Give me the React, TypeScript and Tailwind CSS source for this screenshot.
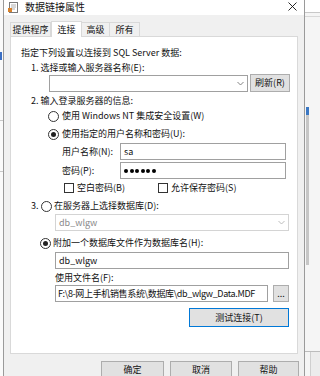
import React from "react";

const Radio = ({ checked }: { checked?: boolean }) => (
  <span className="w-[11px] h-[11px] rounded-full border border-[#333333] bg-white flex items-center justify-center shrink-0">
    {checked && <span className="w-[5px] h-[5px] rounded-full bg-[#222222]" />}
  </span>
);

const Check = () => <span className="w-[10px] h-[10px] border border-[#333333] bg-white shrink-0" />;

const Chevron = ({ color }: { color: string }) => (
  <svg width="7" height="5" viewBox="0 0 7 5" className="shrink-0">
    <path d="M0.5 1 L3.5 4 L6.5 1" fill="none" stroke={color} strokeWidth="0.9" />
  </svg>
);

export default function App() {
  return (
    <div className="w-[320px] h-[376px] overflow-hidden flex bg-[#f0f0f0] font-['Noto_Sans_CJK_SC','Noto_Sans',sans-serif] text-[9px] leading-[12px] text-[#111111]">
      {/* left strip (other window) */}
      <div className="w-[4px] h-full bg-[#fafafa] border-r border-[#9a9a9a] flex flex-col shrink-0">
        <div className="h-[52px]" />
        <div className="h-[8px] bg-[#3b6fc4] w-[2px]" />
        <div className="h-[60px]" />
        <div className="h-px bg-[#c8c8c8]" />
        <div className="h-[50px]" />
        <div className="h-px bg-[#c8c8c8]" />
      </div>

      {/* dialog */}
      <div className="w-[300px] h-full flex flex-col shrink-0 bg-[#f0f0f0]">
        {/* title bar */}
        <div className="h-[15px] bg-white flex items-center shrink-0">
          <svg width="11" height="11" viewBox="0 0 11 11" className="ml-[4px] -mt-[1px] shrink-0">
            <rect x="1.5" y="0.5" width="8" height="10" fill="#fff" stroke="#7a7a7a" />
            <path d="M3 3 H8 M3 5 H8 M3 7 H7" stroke="#9a9a9a" strokeWidth="0.8" />
            <rect x="0" y="6" width="4" height="4" fill="#d9822b" />
          </svg>
          <span className="ml-[6px] text-[10px] leading-[14px] -mt-[1px]">数据链接属性</span>
          <div className="flex-1" />
          <svg width="9" height="9" viewBox="0 0 9 9" className="mr-[7px] -mt-[3px]">
            <path d="M0.5 0.5 L8.5 8.5 M8.5 0.5 L0.5 8.5" stroke="#111" strokeWidth="0.9" />
          </svg>
        </div>

        {/* tabs */}
        <div className="ml-[6px] mt-[5px] h-[16px] flex items-end relative z-10 shrink-0">
          <div className="w-[41px] h-[14px] border border-b-0 border-[#d9d9d9] bg-[#f0f0f0] flex items-center justify-center">提供程序</div>
          <div className="w-[31px] h-[16px] -mb-px border border-b-0 border-[#d9d9d9] bg-white flex items-center justify-center">连接</div>
          <div className="w-[28px] h-[14px] border border-b-0 border-l-0 border-[#d9d9d9] bg-[#f0f0f0] flex items-center justify-center">高级</div>
          <div className="w-[30px] h-[14px] border border-b-0 border-l-0 border-[#d9d9d9] bg-[#f0f0f0] flex items-center justify-center">所有</div>
        </div>

        {/* panel */}
        <div className="ml-[6px] w-[288px] h-[318px] bg-white border border-[#d9d9d9] flex flex-col shrink-0">
          <div className="mt-[10px] ml-[10px] h-[12px]">指定下列设置以连接到 SQL Server 数据:</div>
          <div className="mt-[3px] ml-[20px] h-[12px]">1. 选择或输入服务器名称(E):</div>
          <div className="mt-0 ml-[38px] h-[18px] flex items-start">
            <div className="mt-[1px] w-[199px] h-[17px] border border-[#a0a0a0] bg-white flex items-center justify-end pr-[3px]">
              <Chevron color="#777" />
            </div>
            <div className="ml-[2px] w-[40px] h-[18px] border border-[#adadad] bg-[#e1e1e1] flex items-center justify-center">刷新(R)</div>
          </div>
          <div className="mt-[3px] ml-[20px] h-[12px]">2. 输入登录服务器的信息:</div>
          <div className="mt-[3px] ml-[37px] h-[12px] flex items-center gap-[3px]">
            <Radio />
            <span>使用 Windows NT 集成安全设置(W)</span>
          </div>
          <div className="mt-[6px] ml-[37px] h-[12px] flex items-center gap-[3px]">
            <Radio checked />
            <span>使用指定的用户名称和密码(U):</span>
          </div>
          <div className="mt-[3px] ml-[51px] h-[17px] flex items-center">
            <span className="w-[58px]">用户名称(N):</span>
            <div className="w-[166px] h-[17px] border border-[#a0a0a0] bg-white flex items-center pl-[3px]">sa</div>
          </div>
          <div className="mt-[2px] ml-[51px] h-[17px] flex items-center">
            <span className="w-[58px]">密码(P):</span>
            <div className="w-[166px] h-[17px] border border-[#a0a0a0] bg-white flex items-center pl-[3px] gap-[1.5px]">
              <span className="w-[4px] h-[4px] rounded-full bg-black" />
              <span className="w-[4px] h-[4px] rounded-full bg-black" />
              <span className="w-[4px] h-[4px] rounded-full bg-black" />
              <span className="w-[4px] h-[4px] rounded-full bg-black" />
              <span className="w-[4px] h-[4px] rounded-full bg-black" />
              <span className="w-[4px] h-[4px] rounded-full bg-black" />
            </div>
          </div>
          <div className="mt-[3px] ml-[53px] h-[12px] flex items-center">
            <div className="w-[94px] flex items-center gap-[3px]">
              <Check />
              <span>空白密码(B)</span>
            </div>
            <div className="flex items-center gap-[3px]">
              <Check />
              <span>允许保存密码(S)</span>
            </div>
          </div>
          <div className="mt-[6px] ml-[20px] h-[12px] flex items-center">
            <span className="w-[10px]">3.</span>
            <Radio />
            <span className="ml-[2px]">在服务器上选择数据库(D):</span>
          </div>
          <div className="mt-[2px] ml-[44px] w-[234px] h-[17px] border border-[#d4d4d4] bg-white flex items-center pl-[3px] pr-[3px] text-[#8a8a8a]">
            <span className="flex-1">db_wlgw</span>
            <Chevron color="#b5b5b5" />
          </div>
          <div className="mt-[6px] ml-[29px] h-[12px] flex items-center">
            <Radio checked />
            <span className="ml-[2px]">附加一个数据库文件作为数据库名(H):</span>
          </div>
          <div className="mt-[3px] ml-[44px] w-[234px] h-[17px] border border-[#a0a0a0] bg-white flex items-center pl-[3px]">db_wlgw</div>
          <div className="mt-[3px] ml-[44px] h-[12px]">使用文件名(F):</div>
          <div className="mt-[1px] ml-[44px] h-[17px] flex items-center">
            <div className="w-[213px] h-[17px] border border-[#a0a0a0] bg-white flex items-center pl-[2px] whitespace-nowrap overflow-hidden tracking-[-0.35px]">F:\8-网上手机销售系统\数据库\db_wlgw_Data.MDF</div>
            <div className="ml-[5px] w-[16px] h-[17px] border border-[#adadad] bg-[#e1e1e1] flex items-center justify-center leading-none">...</div>
          </div>
          <div className="mt-[6px] ml-[178px] w-[100px] h-[19px] border border-[#0078d7] bg-[#e1e1e1] flex items-center justify-center">测试连接(T)</div>
        </div>

        {/* bottom buttons */}
        <div className="mt-[7px] flex justify-end gap-[6px] pr-[5px] shrink-0">
          <div className="w-[63px] h-[17px] border border-[#adadad] bg-[#e1e1e1] flex items-center justify-center">确定</div>
          <div className="w-[62px] h-[17px] border border-[#adadad] bg-[#e1e1e1] flex items-center justify-center">取消</div>
          <div className="w-[61px] h-[17px] border border-[#adadad] bg-[#e1e1e1] flex items-center justify-center">帮助</div>
        </div>
      </div>

      {/* right strip (other window) */}
      <div className="flex-1 h-full border-l border-[#9a9a9a] bg-[#f5f5f5] flex flex-col">
        <div className="h-[13px] bg-white border-b border-[#c8c8c8]" />
        <div className="h-[4px] border-b border-[#d8d8d8]" />
        <div className="ml-[1px] mt-[90px] w-[3px] h-[8px] bg-[#3b78c4]" />
        <div className="ml-[1px] w-[3px] h-[150px] bg-[#c6c6c6]" />
        <div className="flex-1" />
        <div className="h-px bg-[#bcbcbc]" />
        <div className="h-[24px] ml-[5px] border-l border-[#cfcfcf] bg-[#ececec]" />
      </div>
    </div>
  );
}
